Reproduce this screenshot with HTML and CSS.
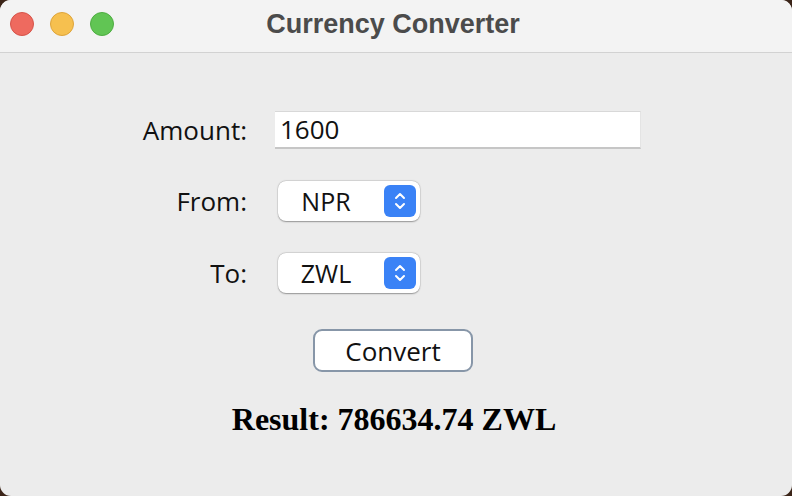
FILE: index.html
```html
<!DOCTYPE html>
<html>
<head>
<meta charset="utf-8">
<link rel="stylesheet" href="styles.css">
</head>
<body>
<div class="window">
  <div class="titlebar">
    <div class="lights">
      <span class="light red"></span>
      <span class="light yellow"></span>
      <span class="light green"></span>
    </div>
    <div class="title">Currency Converter</div>
  </div>
  <div class="content">
    <div class="form">
      <label class="label">Amount:</label>
      <div class="field">1600</div>
      <label class="label">From:</label>
      <div class="select"><span class="select-text">NPR</span><span class="stepper"><svg width="16" height="24" viewBox="0 0 16 24"><path d="M4 9 L8 5 L12 9" fill="none" stroke="#fff" stroke-width="2" stroke-linecap="round" stroke-linejoin="round"/><path d="M4 15 L8 19 L12 15" fill="none" stroke="#fff" stroke-width="2" stroke-linecap="round" stroke-linejoin="round"/></svg></span></div>
      <label class="label">To:</label>
      <div class="select"><span class="select-text">ZWL</span><span class="stepper"><svg width="16" height="24" viewBox="0 0 16 24"><path d="M4 9 L8 5 L12 9" fill="none" stroke="#fff" stroke-width="2" stroke-linecap="round" stroke-linejoin="round"/><path d="M4 15 L8 19 L12 15" fill="none" stroke="#fff" stroke-width="2" stroke-linecap="round" stroke-linejoin="round"/></svg></span></div>
    </div>
    <button class="convert">Convert</button>
    <div class="result">Result: 786634.74 ZWL</div>
  </div>
</div>
</body>
</html>
```

FILE: styles.css
```css
html, body {
  margin: 0;
  padding: 0;
  width: 792px;
  height: 496px;
  background: #3b2418;
  overflow: hidden;
}
.window {
  width: 792px;
  height: 496px;
  background: #ececec;
  border-radius: 11px;
  overflow: hidden;
  display: flex;
  flex-direction: column;
}
.titlebar {
  height: 52px;
  background: #f3f3f3;
  border-bottom: 1px solid #d2d2d2;
  position: relative;
  display: flex;
  align-items: center;
  justify-content: center;
  flex-shrink: 0;
}
.lights {
  position: absolute;
  left: 10px;
  top: 12px;
  display: flex;
  gap: 16px;
}
.light {
  width: 22px;
  height: 22px;
  border-radius: 50%;
  display: block;
}
.red { background: #ee6a5f; border: 1px solid #d65349; }
.yellow { background: #f6c04f; border: 1px solid #dea43a; }
.green { background: #61c554; border: 1px solid #4ead41; }
.title {
  font-family: "Liberation Sans", Arial, sans-serif;
  font-weight: bold;
  font-size: 27px;
  color: #4b4b4b;
  margin-top: -3px;
  margin-left: -6px;
}
.content {
  display: flex;
  flex-direction: column;
  align-items: flex-start;
  padding-top: 58px;
}
.form {
  display: grid;
  grid-template-columns: 247px auto;
  column-gap: 28px;
  row-gap: 32px;
  align-items: center;
}
.label {
  justify-self: end;
  font-family: "Open Sans", "Noto Sans", sans-serif;
  font-size: 26px;
  line-height: 34px;
  color: #111;
}
.field {
  width: 366px;
  height: 38px;
  background: #fff;
  border-top: 1px solid #d8d8d8;
  border-bottom: 2px solid #c6c6c6;
  border-right: 1px solid #e4e4e4;
  box-sizing: border-box;
  font-family: "Open Sans", "Noto Sans", sans-serif;
  font-size: 26px;
  color: #111;
  padding-left: 5px;
  line-height: 34px;
}
.select {
  width: 142px;
  height: 40px;
  margin-left: 3px;
  background: #fff;
  border-radius: 8px;
  box-shadow: 0 0.5px 1.5px rgba(0,0,0,0.35), 0 0 0 0.5px rgba(0,0,0,0.08);
  box-sizing: border-box;
  display: flex;
  align-items: center;
  padding: 0 4px 0 0;
}
.select-text {
  flex: 1;
  text-align: center;
  font-family: "Open Sans", "Noto Sans", sans-serif;
  font-size: 25px;
  line-height: 34px;
  color: #111;
  padding-right: 10px;
}
.stepper {
  width: 32px;
  height: 32px;
  background: #3a82f6;
  border-radius: 6px;
  display: flex;
  align-items: center;
  justify-content: center;
}
.convert {
  margin: 36px 0 0 313px;
  width: 160px;
  height: 43px;
  background: #fff;
  border: 2px solid #8796a8;
  border-radius: 9px;
  font-family: "Open Sans", "Noto Sans", sans-serif;
  font-size: 26px;
  color: #111;
  padding: 0;
  line-height: 36px;
}
.result {
  align-self: center;
  margin-top: 29px;
  font-family: "Liberation Serif", "Times New Roman", serif;
  font-weight: bold;
  font-size: 32px;
  color: #000;
  margin-left: -4px;
}
```
